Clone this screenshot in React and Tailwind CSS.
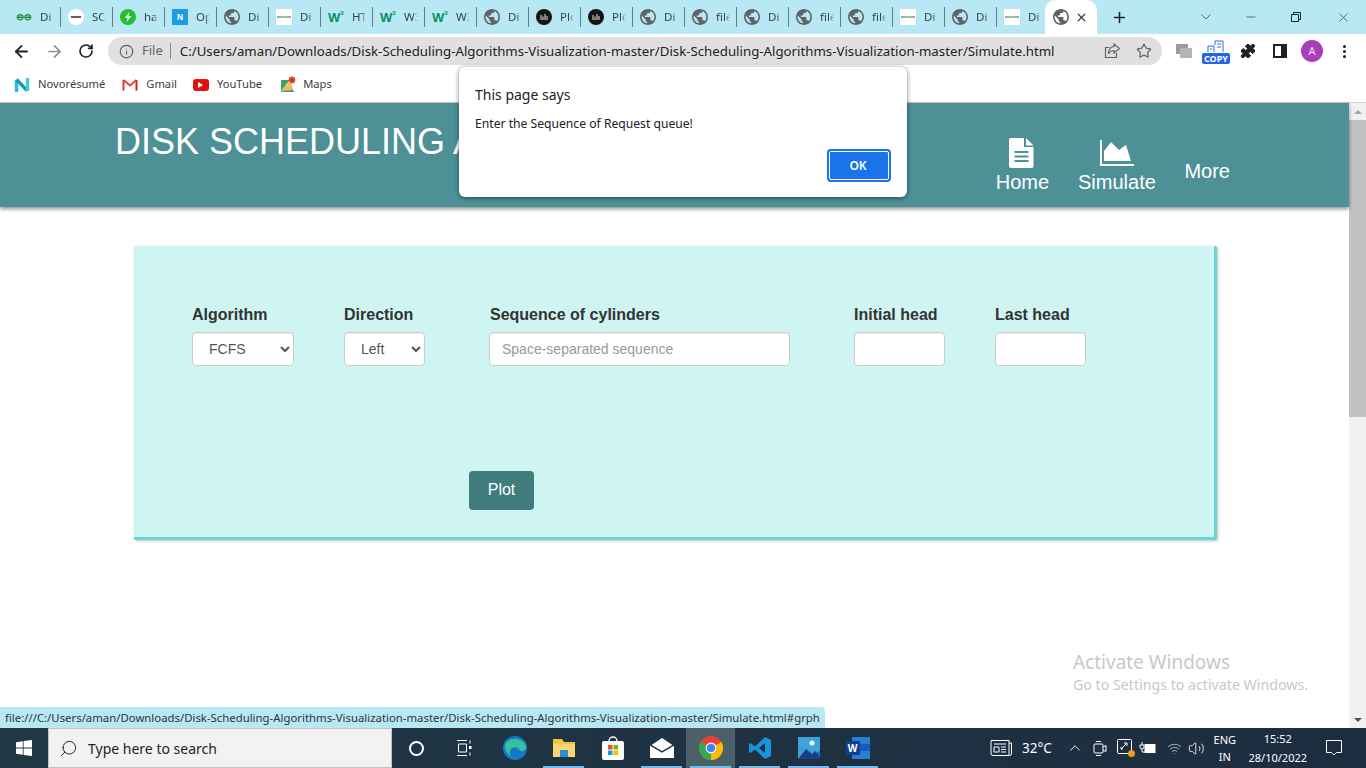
import React from "react";
import { ArrowLeft, ArrowRight, RotateCw, Info, Star, Puzzle, Plus, X, ChevronDown, ChevronUp, Minus, Search, Volume2, Wifi, MoreVertical } from "lucide-react";

const Globe = ({ c = "#5f6368", s = 16 }) => (
  <svg width={s} height={s} viewBox="2 2 20 20" fill={c}>
    <path d="M12 2C6.48 2 2 6.48 2 12s4.48 10 10 10 10-4.48 10-10S17.52 2 12 2zm-1 17.93c-3.95-.49-7-3.85-7-7.93 0-.62.08-1.21.21-1.79L9 15v1c0 1.1.9 2 2 2v1.93zm6.9-2.54c-.26-.81-1-1.39-1.9-1.39h-1v-3c0-.55-.45-1-1-1H8v-2h2c.55 0 1-.45 1-1V7h2c1.1 0 2-.9 2-2v-.41c2.93 1.19 5 4.06 5 7.41 0 2.08-.8 3.97-2.1 5.39z" />
  </svg>
);

const Fav = ({ t }) => {
  if (t === "gfg")
    return (
      <svg width="16" height="16" viewBox="0 0 16 16" fill="none" stroke="#2f8d46" strokeWidth="1.4">
        <path d="M8 8.3H1.2C1.6 5.5 5.5 4.8 7 7.2M8 8.3h6.8C14.4 5.5 10.5 4.8 9 7.2M7 9.4C5.5 11.8 1.800 11 1.200 8.300M9 9.400c1.500 2.400 5.200 1.600 5.800-1.100" />
      </svg>
    );
  if (t === "sc")
    return (
      <div className="w-[16px] h-[16px] rounded-full bg-white flex items-center justify-center">
        <div className="w-[10px] h-[2px] bg-[#7a5560]" />
      </div>
    );
  if (t === "bolt")
    return (
      <svg width="16" height="16" viewBox="0 0 16 16">
        <circle cx="8" cy="8" r="8" fill="#1fc12f" />
        <path d="M9.500 2.800 4.800 9h2.800l-1 4.300L11.300 7H8.600z" fill="#fff" />
      </svg>
    );
  if (t === "n")
    return <div className="w-[16px] h-[16px] bg-[#1d9ae0] text-white text-[8px] font-bold leading-[16px] text-center">N</div>;
  if (t === "globe") return <Globe />;
  if (t === "rect")
    return (
      <div className="w-[16px] h-[16px] bg-white flex items-center justify-center">
        <div className="w-[14px] h-[2px] bg-[linear-gradient(90deg,#7fb0c0,#a8c98a,#7fb0c0)]" />
      </div>
    );
  if (t === "w3")
    return (
      <div className="w-[16px] h-[16px] flex items-start text-[#04905f] font-bold leading-none [font-family:'Liberation_Sans',sans-serif]">
        <span className="text-[13px] mt-[2px]">W</span>
        <span className="text-[6px] mt-[1px]">3</span>
      </div>
    );
  if (t === "pk")
    return (
      <svg width="16" height="16" viewBox="0 0 16 16">
        <circle cx="8" cy="8" r="8" fill="#141414" />
        <path d="M5 6v5M7 7.500V11M9 5v6M11 7v4" stroke="#e8e8e8" strokeWidth="1" />
      </svg>
    );
  return null;
};

const tabs = [
  ["gfg", "Di"], ["sc", "SC"], ["bolt", "ha"], ["n", "Op"], ["globe", "Di"], ["rect", "Di"], ["w3", "HT"],
  ["w3", "W3"], ["w3", "W3"], ["globe", "Di"], ["pk", "Plo"], ["pk", "Plo"], ["globe", "Di"], ["globe", "file"],
  ["globe", "Di"], ["globe", "file"], ["globe", "file"], ["rect", "Di"], ["globe", "Di"], ["rect", "Di"],
];

const Tab = ({ t, label }) => (
  <div className="w-[52px] h-[20px] shrink-0 flex items-center pl-[7px] border-r border-[#5d7f8a]">
    <div className="w-[16px] h-[16px] shrink-0"><Fav t={t} /></div>
    <span className="ml-[8px] w-[14px] overflow-hidden whitespace-nowrap text-[11.500px] leading-[20px] text-[#3c4043] [mask-image:linear-gradient(90deg,#000_65%,transparent)]">{label}</span>
  </div>
);

const TabStrip = () => (
  <div className="h-[34px] bg-[#b8e8f3] flex items-center pl-[9px] shrink-0">
    {tabs.map(([t, l], i) => <Tab key={i} t={t} label={l} />)}
    <div className="w-[52px] h-[34px] -ml-[4px] bg-white rounded-t-[10px] flex items-center pl-[8px] shrink-0">
      <Globe />
      <X size={13} strokeWidth={2.4} className="ml-[6px] text-[#3c4043]" />
    </div>
    <Plus size={17} strokeWidth={2.2} className="ml-[14px] text-[#202124]" />
    <div className="ml-auto flex items-center text-[#3c4043]">
      <ChevronDown size={16} strokeWidth={1.2} className="mr-[30px]" />
      <Minus size={14} strokeWidth={1.2} className="mr-[32px]" />
      <svg width="12" height="12" viewBox="0 0 12 12" fill="none" stroke="#202124" className="mr-[34px]">
        <path d="M1.500 3.500h7v7h-7zM3.500 3.500v-2h7v7h-2" />
      </svg>
      <X size={15} strokeWidth={1.1} className="mr-[15px]" />
    </div>
  </div>
);

const Toolbar = () => (
  <div className="h-[34px] bg-white flex items-center shrink-0">
    <ArrowLeft size={19} strokeWidth={2.3} className="ml-[12px] text-[#202124]" />
    <ArrowRight size={19} strokeWidth={2.2} className="ml-[14px] text-[#8a8f94]" />
    <RotateCw size={16} strokeWidth={2.5} className="ml-[14px] text-[#202124]" />
    <div className="ml-[14px] w-[1054px] h-[28px] rounded-full bg-[#e0e0e0] flex items-center text-[#202124]">
      <Info size={15} strokeWidth={2} className="ml-[11px] text-[#5f6368]" />
      <span className="ml-[8px] text-[13px] text-[#5f6368]">File</span>
      <div className="ml-[7px] w-px h-[16px] bg-[#80868b]" />
      <span className="ml-[9px] pt-[1px] text-[13.250px] whitespace-nowrap">C:/Users/aman/Downloads/Disk-Scheduling-Algorithms-Visualization-master/Disk-Scheduling-Algorithms-Visualization-master/Simulate.html</span>
      <svg width="17" height="16" viewBox="0 0 17 16" fill="none" stroke="#5f6368" strokeWidth="1.200" className="ml-auto">
        <path d="M12.500 10v4.500h-11V4.500h4" />
        <path d="M10 1l5.500 4.500L10 10V7.500C7 7.500 5.500 9 4.500 11c0-4 2-7 5.500-7.500z" />
      </svg>
      <Star size={16} strokeWidth={1.8} className="ml-[15px] mr-[10px] text-[#5f6368]" />
    </div>
    <div className="ml-[14px] w-[16px] h-[14px] flex items-center justify-center">
      <div className="relative w-[16px] h-[14px]">
        <div className="w-[12px] h-[10px] bg-[#9a9a9a]" />
        <div className="absolute right-0 bottom-0 w-[12px] h-[10px] bg-[#b5b5b5]" />
      </div>
    </div>
    <div className="ml-[10px] w-[28px] h-[26px] flex flex-col items-center justify-end">
      <svg width="20" height="13" viewBox="0 0 20 13" fill="none" stroke="#2f6fd8"><path d="M2 12V6h6v6M9 5V1h8v11" /><path d="M11 4h4M11 7h4M4 9h2" /></svg>
      <div className="w-[28px] h-[11px] bg-[#2563eb] rounded-[2px] text-white text-[9px] font-bold leading-[11px] text-center">COPY</div>
    </div>
    <Puzzle size={16} fill="#202124" strokeWidth={1.5} className="ml-[10px] text-[#202124]" />
    <div className="ml-[17px] w-[14px] h-[14px] border-2 border-[#202124] border-r-[6px]" />
    <div className="ml-[14px] w-[22px] h-[22px] rounded-full bg-[#a93fb8] text-[#f4e3f7] text-[11px] leading-[22px] text-center">A</div>
    <MoreVertical size={17} strokeWidth={2.4} className="ml-[13px] text-[#202124]" />
  </div>
);

const Bookmarks = () => (
  <div className="h-[35px] bg-white border-b border-[#d0d0d0] flex items-center pb-[1px] text-[11.200px] text-[#3c4043] shrink-0">
    <svg width="16" height="16" viewBox="0 0 16 16" className="ml-[14px]" fill="none" strokeWidth="3.400">
      <path d="M2.500 15V3" stroke="#2bb7d6" /><path d="M2.500 2.500 13 13.500" stroke="#1a9bb5" /><path d="M13.500 14V1" stroke="#37cfd0" />
    </svg>
    <span className="ml-[8px]">Novorésumé</span>
    <svg width="16" height="13" viewBox="0 0 16 13" className="ml-[17px]" fill="none" strokeWidth="2">
      <path d="M1.500 12.500V2" stroke="#d33b2c" /><path d="M14.500 12.500V2" stroke="#c5221f" /><path d="M1.500 2 8 7.500 14.500 2" stroke="#ea4335" />
    </svg>
    <span className="ml-[8px]">Gmail</span>
    <div className="ml-[16px] w-[16px] h-[12px] rounded-[3px] bg-[#e60f0f] flex items-center justify-center">
      <div className="w-0 h-0 border-y-[3px] border-y-transparent border-l-[5px] border-l-white" />
    </div>
    <span className="ml-[8px]">YouTube</span>
    <svg width="16" height="17" viewBox="0 0 16 17" className="ml-[18px]">
      <path d="M1 4h9L1 15z" fill="#3fa35a" /><path d="M1 15 10 6l4 10H1z" fill="#4a86e8" /><path d="M1 15l9-9 3 8z" fill="#f5c33b" />
      <circle cx="12" cy="4" r="3.400" fill="#e8503a" /><circle cx="12" cy="4" r="1.200" fill="#8c2a1d" />
    </svg>
    <span className="ml-[7px]">Maps</span>
  </div>
);

const DocIcon = () => (
  <svg width="26" height="30" viewBox="0 0 26 30" className="mr-[2px]">
    <path d="M1 2a2 2 0 0 1 2-2h13v9h9.500v19a2 2 0 0 1-2 2H3a2 2 0 0 1-2-2z" fill="#fff" />
    <path d="M18 0l7.500 7.500H18z" fill="#fff" />
    <path d="M6.500 14h14M6.500 18.500h14M6.500 23h14" stroke="#4d9196" strokeWidth="2" />
  </svg>
);

const AreaIcon = () => (
  <svg width="34" height="26" viewBox="0 0 34 26">
    <path d="M1 0v25h33" fill="none" stroke="#fff" strokeWidth="2" />
    <path d="M4 21V11l7-9 6 6 2 2 7-5 5 16z" fill="#fff" />
  </svg>
);

const Header = () => (
  <div className="h-[104px] bg-[#4d9196] shadow-[0_2px_4px_rgba(0,0,0,0.45)] flex relative shrink-0">
    <h1 className="ml-[115px] mt-[18px] text-[36px] leading-[41px] text-white whitespace-nowrap">DISK SCHEDULING ALGORITHMS</h1>
    <div className="ml-auto flex items-start text-white text-[20px] leading-[23px]">
      <div className="w-[52px] mt-[35px] flex flex-col items-center">
        <DocIcon />
        <span className="mt-[3px]">Home</span>
      </div>
      <div className="ml-[30px] w-[77px] mt-[37px] flex flex-col items-center">
        <AreaIcon />
        <span className="mt-[5px]">Simulate</span>
      </div>
      <div className="ml-[29px] mr-[119px] mt-[57px]">More</div>
    </div>
  </div>
);

const selectCls = "h-[34px] bg-white border border-[#ccc] rounded-[4px] pl-[12px] text-[14px] text-[#555] shadow-[inset_0_1px_1px_rgba(0,0,0,0.075)]";
const inputCls = "block h-[34px] bg-white border border-[#ccc] rounded-[4px] px-[12px] text-[14px] text-[#555] placeholder:text-[#999] shadow-[inset_0_1px_1px_rgba(0,0,0,0.075)]";
const labelCls = "block h-[22px] mb-[6px] text-[16px] leading-[22px] font-bold text-[#333]";

const Card = () => (
  <div className="mt-[39px] ml-[134px] w-[1083px] h-[294px] bg-[#cff5f2] border-r-[3px] border-b-[3px] border-[#6dd2d4] rounded-[2px] shadow-[1px_1px_3px_rgba(0,0,0,0.25)] pt-[58px]">
    <div className="flex items-start">
      <div className="ml-[58px] w-[102px]">
        <label className={labelCls}>Algorithm</label>
        <select className={selectCls + " w-[102px]"} defaultValue="FCFS"><option>FCFS</option></select>
      </div>
      <div className="ml-[50px] w-[81px]">
        <label className={labelCls}>Direction</label>
        <select className={selectCls + " w-[81px]"} defaultValue="Left"><option>Left</option></select>
      </div>
      <div className="ml-[64px] w-[301px]">
        <label className={labelCls + " pl-[1px]"}>Sequence of cylinders</label>
        <input className={inputCls + " w-[301px]"} placeholder="Space-separated sequence" />
      </div>
      <div className="ml-[64px] w-[91px]">
        <label className={labelCls}>Initial head</label>
        <input className={inputCls + " w-[91px]"} />
      </div>
      <div className="ml-[50px] w-[91px]">
        <label className={labelCls}>Last head</label>
        <input className={inputCls + " w-[91px]"} />
      </div>
    </div>
    <button className="block ml-[335px] mt-[105px] w-[65px] h-[39px] pb-[2px] rounded-[4px] bg-[#417c7d] text-white text-[16px]">Plot</button>
  </div>
);

const Scrollbar = () => (
  <div className="w-[17px] bg-[#f1f1f1] flex flex-col items-center shrink-0">
    <div className="h-[17px] flex items-center justify-center">
      <div className="w-0 h-0 border-x-[4px] border-x-transparent border-b-[4px] border-b-[#a3a3a3]" />
    </div>
    <div className="w-[17px] h-[297px] bg-[#c1c1c1]" />
    <div className="mt-auto h-[17px] flex items-center justify-center">
      <div className="w-0 h-0 border-x-[4px] border-x-transparent border-t-[4px] border-t-[#505050]" />
    </div>
  </div>
);

const Dialog = () => (
  <div className="absolute left-[459px] top-[67px] w-[448px] h-[130px] bg-white rounded-[6px] shadow-[0_1px_5px_rgba(0,0,0,0.5)] z-20 pl-[16px] pr-[16px]">
    <div className="mt-[17px] h-[21px] text-[14px] leading-[21px] text-[#202124]">This page says</div>
    <div className="mt-[9px] h-[20px] text-[12.150px] leading-[20px] text-[#202124]">Enter the Sequence of Request queue!</div>
    <div className="flex justify-end mt-[15px]">
      <button className="w-[64px] h-[33px] pr-[2px] rounded-[4px] bg-[#1a73e8] border-2 border-[#1a73e8] outline outline-1 -outline-offset-[3px] outline-white text-white text-[12px] font-semibold">OK</button>
    </div>
  </div>
);

const Under = ({ on = true, active = false, children }) => (
  <div className={"w-[49px] h-[40px] flex items-center justify-center shrink-0 relative " + (active ? "bg-[#4b6069]" : "")}>
    {children}
    {on && <div className="absolute bottom-0 left-[4px] right-[4px] h-[2px] bg-[#76b9ed]" />}
  </div>
);

const Taskbar = () => (
  <div className="h-[40px] bg-[linear-gradient(90deg,#213844,#1c2d40)] flex items-center text-white shrink-0">
    <div className="w-[48px] flex justify-center">
      <svg width="16" height="16" viewBox="0 0 16 16" fill="#fff"><path d="M0 2.200 6.800 1.200v6.400H0zM7.600 1.100 16 0v7.600H7.600zM0 8.400h6.800v6.400L0 13.800zM7.600 8.400H16V16l-8.400-1.100z" /></svg>
    </div>
    <div className="w-[344px] h-[40px] bg-[#f2f2f2] border border-[#c4c4c4] flex items-center text-[#222]">
      <Search size={19} strokeWidth={1.2} className="ml-[10px] -scale-x-100" />
      <span className="ml-[10px] text-[14px]">Type here to search</span>
    </div>
    <div className="flex">
      <Under on={false}><div className="w-[15px] h-[15px] rounded-full border-[2.500px] border-white" /></Under>
      <Under on={false}>
        <svg width="18" height="18" viewBox="0 0 18 18" fill="none" stroke="#fff" className="-ml-[3px]"><path d="M2 1.500h10M2 16.500h10M3.500 5h8v8h-8zM15 1.500v3M15 13.500v3" /><rect x="14" y="7" width="2.500" height="3" fill="#fff" stroke="none" /></svg>
      </Under>
      <Under on={false}>
        <svg width="24" height="24" viewBox="0 0 24 24"><circle cx="12" cy="12" r="12" fill="#1478c8" /><path d="M2 9C5 1 19 0 23 10c1 4-3 6-6 5-1-3-4-5-8-3-3 2-3 6 0 9-4-2-8-7-7-12z" fill="#35c1a0" /></svg>
      </Under>
      <Under>
        <svg width="24" height="20" viewBox="0 0 24 20"><path d="M1 1h9l2 3h11v15H1z" fill="#f5c142" /><path d="M1 6h22v13H1z" fill="#fbd774" /><path d="M8 12h8v7H8z" fill="#2b8fd6" /></svg>
      </Under>
      <Under on={false}>
        <svg width="24" height="26" viewBox="0 0 24 26"><path d="M8 6a4 4 0 0 1 8 0" fill="none" stroke="#fff" strokeWidth="1.300" /><rect x="1" y="6" width="22" height="19" rx="2" fill="#fff" /><rect x="7" y="10" width="4.500" height="4.500" fill="#f25022" /><rect x="12.500" y="10" width="4.500" height="4.500" fill="#7fba00" /><rect x="7" y="15.500" width="4.500" height="4.500" fill="#00a4ef" /><rect x="12.500" y="15.500" width="4.500" height="4.500" fill="#ffb900" /></svg>
      </Under>
      <Under>
        <svg width="24" height="20" viewBox="0 0 24 20"><path d="M0 8 12 0l12 8v12H0z" fill="#fff" /><path d="M0 7l12 7 12-7" fill="none" stroke="#213844" strokeWidth="1.500" /></svg>
      </Under>
      <Under active>
        <svg width="24" height="24" viewBox="0 0 24 24">
          <circle cx="12" cy="12" r="12" fill="#e94235" />
          <path d="M12 12 1.600 6 A12 12 0 0 0 12 24z" fill="#34a853" />
          <path d="M12 12 12 24A12 12 0 0 0 22.400 6z" fill="#fbbc04" />
          <circle cx="12" cy="12" r="5.400" fill="#fff" /><circle cx="12" cy="12" r="4.300" fill="#4285f4" />
        </svg>
      </Under>
      <Under>
        <svg width="24" height="24" viewBox="0 0 24 24"><path d="M17 1l6 3v16l-6 3-10-9.500L2.500 17 1 16v-8l1.500-1L7 10.500zM17 7l-6 5 6 5z" fill="#1a93dd" fillRule="evenodd" /></svg>
      </Under>
      <Under>
        <svg width="24" height="24" viewBox="0 0 24 24"><rect x="1" y="1" width="22" height="22" fill="#1d6fb8" /><path d="M1 1h22v14L1 23z" fill="#4db8ea" opacity=".7" /><path d="M1 23l8-10 6 5 3-3 5 6v2z" fill="#1b3f87" /><circle cx="15" cy="7" r="2.500" fill="#fff" /></svg>
      </Under>
      <Under>
        <div className="w-[24px] h-[22px] relative flex items-center">
          <div className="absolute left-[6px] right-0 top-0 bottom-0 bg-[#2b7cd3]" />
          <div className="absolute left-[6px] right-0 top-[7px] h-[7px] bg-[#185abd]" />
          <div className="relative w-[14px] h-[14px] bg-[#103f91] rounded-[1px] text-white text-[10px] font-bold leading-[14px] text-center">W</div>
        </div>
      </Under>
    </div>
    <svg width="24" height="18" viewBox="0 0 24 18" fill="none" stroke="#fff" className="ml-[107px]"><path d="M2 1.500h18v15H4a2 2 0 0 1-2-2zM20 4h2.500v10.500a2 2 0 0 1-2 2" /><path d="M5 5h12M5 8h5v5H5zM12 8h5M12 10.500h5M12 13h5" /></svg>
    <span className="ml-[9px] text-[13.500px] whitespace-nowrap">32°C</span>
    <ChevronUp size={18} strokeWidth={1.200} className="ml-[14px]" />
    <svg width="14" height="17" viewBox="0 0 14 17" fill="none" stroke="#fff" className="ml-[9px]"><rect x="1" y="4" width="9" height="9" rx="1" /><path d="M10 7l3-1.500v6L10 10M3 1.500h5M3 15.500h5" /></svg>
    <div className="ml-[10px] relative w-[16px] h-[18px]">
      <svg width="15" height="15" viewBox="0 0 15 15" fill="none" stroke="#fff"><rect x=".5" y=".5" width="14" height="14" rx="1" /><path d="M4 10l6-6M7 4h3v3M4 8v2h2" /></svg>
      <div className="absolute right-[-2px] bottom-0 w-[7px] h-[7px] rounded-full bg-[#f39a1f]" />
    </div>
    <svg width="17" height="12" viewBox="0 0 17 12" fill="none" stroke="#fff" className="ml-[6px]"><rect x="6" y="2.500" width="10" height="8" fill="#fff" /><path d="M3 0v3M1 3h4v2a2 2 0 0 1-4 0zM3 7v3h3" /></svg>
    <Wifi size={15} strokeWidth={1.200} className="ml-[11px] text-[#cfd6da]" />
    <Volume2 size={17} strokeWidth={1.200} className="ml-[6px]" />
    <div className="ml-[6px] w-[28px] text-[11px] leading-[17px] text-center">ENG<br />IN</div>
    <div className="ml-[6px] w-[66px] text-[11px] leading-[19px] text-center">15:52<br />28/10/2022</div>
    <svg width="16" height="16" viewBox="0 0 16 16" fill="none" stroke="#fff" className="ml-[15px]"><path d="M.5.500h15v12h-5L8 15l-2.500-2.500h-5z" /></svg>
  </div>
);

export default function App() {
  return (
    <div className="relative w-[1366px] h-[768px] overflow-hidden flex flex-col bg-white [font-family:'Noto_Sans',sans-serif]">
      <TabStrip />
      <Toolbar />
      <Bookmarks />
      <div className="h-[625px] flex shrink-0 [font-family:'Liberation_Sans',Arial,sans-serif]">
        <div className="flex-1 min-w-0 flex flex-col">
          <Header />
          <Card />
        </div>
        <Scrollbar />
      </div>
      <Taskbar />
      <Dialog />
      <div className="absolute left-0 bottom-[40px] w-[825px] h-[21px] bg-[#b8e8f3] rounded-tr-[4px] pl-[5px] text-[11.360px] leading-[21px] text-[#333] whitespace-nowrap overflow-hidden z-10">
        file:///C:/Users/aman/Downloads/Disk-Scheduling-Algorithms-Visualization-master/Disk-Scheduling-Algorithms-Visualization-master/Simulate.html#grph
      </div>
      <div className="absolute left-[1073px] top-[650px] text-[#c8c8c8] z-10">
        <div className="text-[19px] leading-[24px]">Activate Windows</div>
        <div className="mt-[1px] text-[14.200px] leading-[20px]">Go to Settings to activate Windows.</div>
      </div>
    </div>
  );
}
